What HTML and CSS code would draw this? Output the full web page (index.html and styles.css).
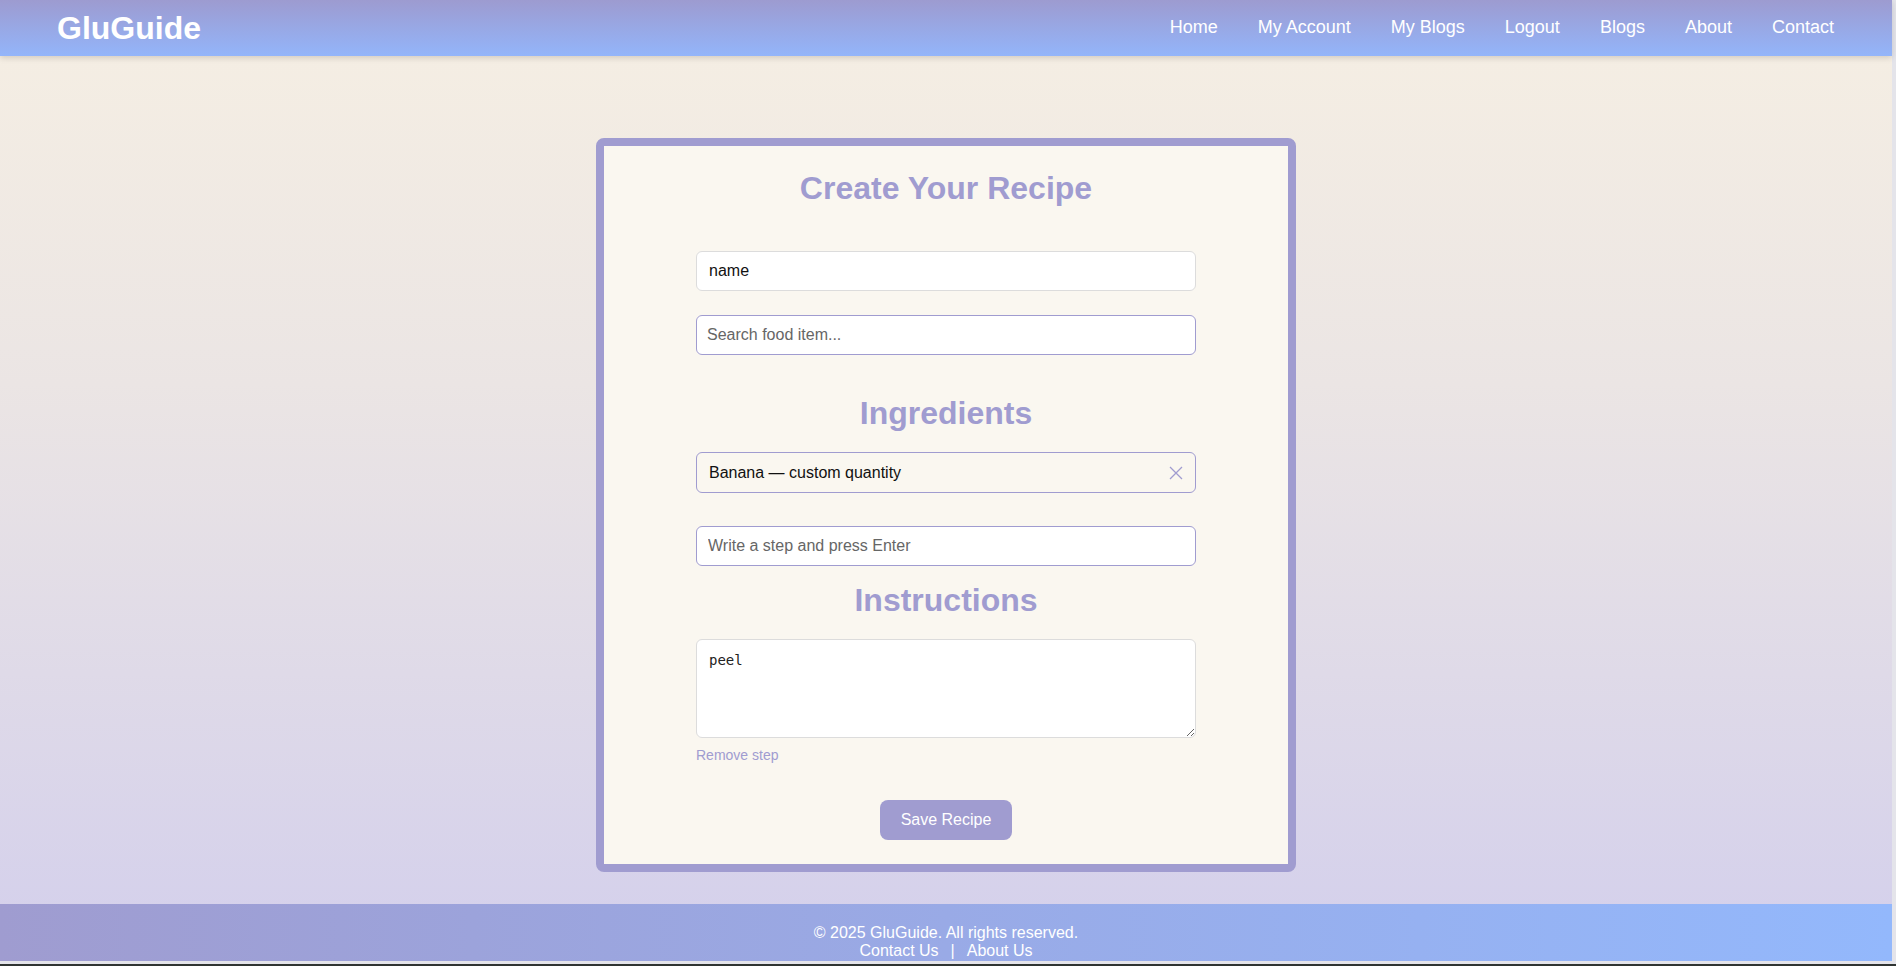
FILE: index.html
```html
<!DOCTYPE html>
<html lang="en">
<head>
<meta charset="utf-8">
<title>GluGuide - Create Your Recipe</title>
<link rel="stylesheet" href="styles.css">
</head>
<body>
<div class="app">
  <header class="topbar">
    <div class="logo">GluGuide</div>
    <nav class="nav">
      <a href="#">Home</a>
      <a href="#">My Account</a>
      <a href="#">My Blogs</a>
      <a href="#">Logout</a>
      <a href="#">Blogs</a>
      <a href="#">About</a>
      <a href="#">Contact</a>
    </nav>
  </header>

  <main class="page">
    <section class="card">
      <h2 class="card-title">Create Your Recipe</h2>
      <form class="recipe-form">
        <input class="field field-name" type="text" value="name">
        <input class="field field-search" type="text" placeholder="Search food item...">

        <h2 class="section-title section-ingredients">Ingredients</h2>
        <div class="ingredient">
          <span class="ingredient-text">Banana — custom quantity</span>
          <span class="remove-x">
            <svg width="14" height="14" viewBox="0 0 14 14"><path d="M1 1 L13 13 M13 1 L1 13" stroke="#a09cd0" stroke-width="1.3" fill="none"/></svg>
          </span>
        </div>

        <input class="field field-step" type="text" placeholder="Write a step and press Enter">

        <h2 class="section-title section-instructions">Instructions</h2>
        <textarea class="step-text">peel</textarea>
        <a class="remove-step" href="#">Remove step</a>

        <button class="save-btn" type="button">Save Recipe</button>
      </form>
    </section>
  </main>

  <footer class="footer">
    <p class="footer-copy">© 2025 GluGuide. All rights reserved.</p>
    <p class="footer-links"><a href="#">Contact Us</a>|<a href="#">About Us</a></p>
  </footer>
</div>
</body>
</html>
```

FILE: styles.css
```css
* { box-sizing: border-box; }

html, body {
  margin: 0;
  padding: 0;
  height: 100%;
}

body {
  font-family: "Liberation Sans", Arial, sans-serif;
  background: linear-gradient(to bottom, #e4e4ea 0, #e4e4ea 964px, #2f3432 964px);
}

.app {
  min-height: 961px;
  margin-right: 4px;
  display: flex;
  flex-direction: column;
  background: linear-gradient(to bottom, #f6efe3 0%, #ebe5e4 40%, #d3cfec 100%);
}

/* Header */
.topbar {
  height: 56px;
  display: flex;
  align-items: center;
  justify-content: space-between;
  padding: 0 58px 0 57px;
  background: linear-gradient(to bottom, #9d9bd0, #93b5fa);
  box-shadow: 0 2px 6px rgba(0, 0, 0, 0.15);
  position: relative;
  z-index: 1;
}

.logo {
  color: #ffffff;
  font-size: 32px;
  font-weight: bold;
}

.nav {
  display: flex;
  gap: 40px;
  margin-bottom: 1px;
}

.nav a {
  color: #ffffff;
  text-decoration: none;
  font-size: 18px;
}

/* Main */
.page {
  flex: 1;
  display: flex;
  justify-content: center;
  align-items: flex-start;
  padding: 82px 0 32px;
}

.card {
  width: 700px;
  border: 8px solid #a09cd0;
  border-radius: 8px;
  background: #faf7f0;
  padding: 24px 0 24px;
  display: flex;
  flex-direction: column;
  align-items: center;
}

.card-title,
.section-title {
  margin: 0;
  color: #a09cd0;
  font-size: 32px;
  font-weight: bold;
  line-height: 37px;
  text-align: center;
}

.recipe-form {
  width: 500px;
  display: flex;
  flex-direction: column;
  margin-top: 44px;
}

.field {
  width: 100%;
  height: 40px;
  font-family: "Liberation Sans", Arial, sans-serif;
  font-size: 16px;
  color: #111;
  background: #ffffff;
  border-radius: 6px;
  outline: none;
}

.field::placeholder {
  color: #666;
}

.field-name {
  border: 1px solid #dcdcdc;
  padding: 0 12px;
}

.field-search {
  margin-top: 24px;
  border: 1px solid #a09cd0;
  padding: 0 10px;
}

.section-ingredients {
  margin-top: 40px;
}

.ingredient {
  margin-top: 20px;
  height: 41px;
  border: 1px solid #a09cd0;
  border-radius: 6px;
  display: flex;
  align-items: center;
  justify-content: space-between;
  padding: 0 12px 0 12px;
}

.ingredient-text {
  font-size: 16px;
  color: #111;
}

.remove-x {
  display: flex;
  align-items: center;
}

.field-step {
  margin-top: 33px;
  border: 1px solid #a09cd0;
  padding: 0 11px;
}

.section-instructions {
  margin-top: 16px;
}

.step-text {
  margin-top: 20px;
  width: 100%;
  height: 99px;
  border: 1px solid #dcdcdc;
  border-radius: 6px;
  background: #ffffff;
  padding: 12px 12px;
  font-family: "DejaVu Sans Mono", "Liberation Mono", monospace;
  font-size: 14px;
  color: #222;
  outline: none;
  display: block;
}

.remove-step {
  margin-top: 9px;
  font-size: 14px;
  line-height: 16px;
  color: #a09cd0;
  text-decoration: none;
  align-self: flex-start;
}

.save-btn {
  margin-top: 37px;
  align-self: center;
  height: 40px;
  padding: 0 21px;
  border: none;
  border-radius: 8px;
  background: #a09cd0;
  color: #ffffff;
  font-family: "Liberation Sans", Arial, sans-serif;
  font-size: 16px;
}

/* Footer */
.footer {
  height: 57px;
  background: linear-gradient(to right, #9f9cd0, #93b8fc);
  color: #ffffff;
  text-align: center;
  font-size: 16px;
  line-height: 18px;
  padding-top: 20px;
}

.footer p {
  margin: 0;
}

.footer-links a {
  color: #ffffff;
  text-decoration: none;
  margin: 0 12px;
}
```
